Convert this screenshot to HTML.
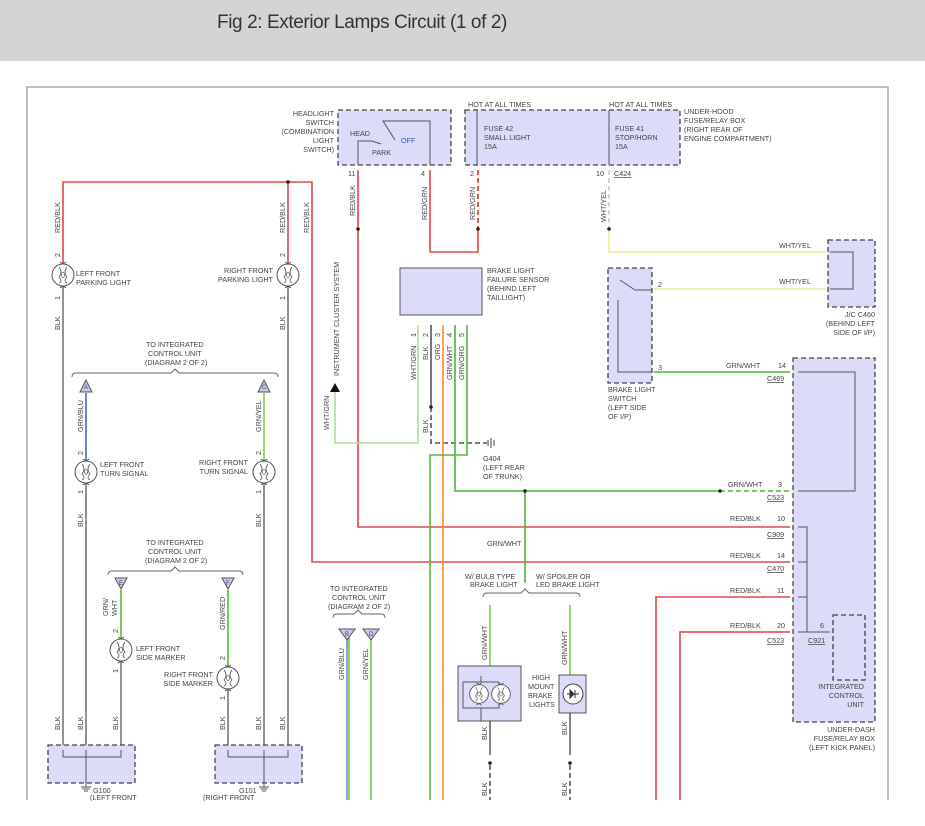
<!DOCTYPE html>
<html><head><meta charset="utf-8"><style>
html,body{margin:0;padding:0;background:#fff;width:925px;height:826px;overflow:hidden}
.hd{position:absolute;left:0;top:0;width:925px;height:61px;background:#d4d4d4}
.hd span{position:absolute;left:217px;top:12px;font:19px "Liberation Sans",sans-serif;color:#333;letter-spacing:-0.4px}
svg{position:absolute;left:0;top:0}
text{font-family:"Liberation Sans",sans-serif;font-size:7.2px;fill:#444}
</style></head><body>
<div class="hd"><span>Fig 2: Exterior Lamps Circuit (1 of 2)</span></div>
<svg width="925" height="826" viewBox="0 0 925 826">
<defs>
<g id="lamp"><circle r="11" fill="#fff" stroke="#555" stroke-width="1"/><path d="M-4,-8 Q0,-3 -4,2 Q0,6 -4,8 M4,-8 Q0,-3 4,2 Q0,6 4,8" fill="none" stroke="#555" stroke-width="0.8"/><ellipse rx="1.5" ry="2.5" fill="none" stroke="#555" stroke-width="0.7"/><path d="M-3,-13 Q0,-10 3,-13 M-3,13 Q0,10 3,13" fill="none" stroke="#555"/></g>
<g id="gnd"><path d="M0,0 v4 M-5,4 h10 M-3.5,6 h7 M-2,8 h4" stroke="#555" fill="none"/></g>
</defs>
<path d="M27,800 V87 H888 V800" fill="none" stroke="#999" stroke-width="1.3"/>
<g fill="none" stroke-width="1.6">
<path d="M63,263 V182 H312 V562 H790" stroke="#e04848"/>
<path d="M288,182 V263" stroke="#d84848"/>
<path d="M358,170 V527 H790" stroke="#e04848"/>
<path d="M430,170 V252 H478 V229" stroke="#e04848"/>
<path d="M478,170 V229" stroke="#e03030" stroke-dasharray="5,3"/>
<path d="M656,800 V597 H790" stroke="#e04848"/>
<path d="M680,800 V632 H790" stroke="#e04848"/>
<path d="M63,287 V745 M288,287 V745 M86,484 V745 M264,484 V745 M121,662 V745 M228,690 V745" stroke="#777"/>
<path d="M86,393 V460" stroke="#4466cc"/>
<path d="M264,393 V460" stroke="#88cc44"/>
<path d="M121,590 V638" stroke="#55bb33"/>
<path d="M228,590 V666" stroke="#55bb33"/>
<path d="M347,638 V800" stroke="#7788cc"/>
<path d="M349,638 V800" stroke="#66cc44"/>
<path d="M371,638 V800" stroke="#66cc44"/>
<path d="M609,170 V229" stroke="#ccc" stroke-dasharray="5,3"/>
<path d="M609,229 V252 H826" stroke="#eeee88"/>
<path d="M654,289 H826" stroke="#eee8a0"/>
<path d="M654,372 H790" stroke="#44bb33"/>
<path d="M418,325 V443 H335 V392" stroke="#b0dca0"/>
<path d="M431,325 V407" stroke="#555"/>
<path d="M431,407 V443 H487" stroke="#555" stroke-dasharray="5,3"/>
<path d="M443,325 V800" stroke="#ff8c1a"/>
<path d="M455,325 V491 H720" stroke="#44bb33"/>
<path d="M720,491 H790" stroke="#44bb33" stroke-dasharray="5,3"/>
<path d="M467,325 V455 H430 V800" stroke="#55bb33"/>
<path d="M525,491 V583" stroke="#44bb33"/>
<path d="M490,605 V667 M570,605 V676" stroke="#77cc55"/>
<path d="M490,721 V755 M570,713 V755" stroke="#666"/>
<path d="M490,765 V800 M570,765 V800" stroke="#555" stroke-dasharray="5,3"/>
</g>
<g fill="#222"><circle cx="288" cy="182" r="1.8"/><circle cx="358" cy="229" r="1.8"/><circle cx="478" cy="229" r="1.8"/><circle cx="609" cy="229" r="1.8"/><circle cx="431" cy="407" r="1.8"/><circle cx="525" cy="491" r="1.8"/><circle cx="720" cy="491" r="1.8"/><circle cx="490" cy="763" r="1.8"/><circle cx="570" cy="763" r="1.8"/><circle cx="383" cy="121" r="1.3"/><circle cx="395" cy="140" r="1.3"/><circle cx="372" cy="141" r="1.3"/></g>
<g fill="#dcdcfa" stroke="#444" stroke-width="1.3" stroke-dasharray="5,3">
<rect x="338" y="110" width="113" height="55"/>
<rect x="465" y="110" width="215" height="55"/>
<rect x="828" y="240" width="47" height="67"/>
<rect x="608" y="268" width="44" height="115"/>
<rect x="793" y="358" width="82" height="364"/>
<rect x="833" y="615" width="32" height="65"/>
<rect x="48" y="745" width="87" height="38"/>
<rect x="215" y="745" width="87" height="38"/>
</g>
<g fill="#dcdcfa" stroke="#555" stroke-width="1">
<rect x="400" y="268" width="82" height="47"/>
<rect x="458" y="666" width="63" height="55"/>
<rect x="559" y="675" width="27" height="38"/>
</g>
<g fill="none" stroke="#555" stroke-width="1">
<path d="M430,165 V121 H383 L395,140 M358,165 V141 H372 L381,144"/>
<path d="M477,110 V165 M609,110 V165"/>
<path d="M830,252 H853 V289 H830"/>
<path d="M620,280 L635,290 H652 M618,300 V372 H652"/>
<path d="M798,372 H855 V491 H798"/>
<path d="M798,527 H807 V632 H798 M807,562 H798 M807,597 H798 M807,632 H830"/>
<path d="M63,757 V750 M63,757 H121 V750 M86,750 V783 M228,757 V750 M228,757 H288 V750 M264,750 V783"/>
<path d="M463,682 H481 V676 M499,682 H481 M463,682 V708 H499 V682 M481,708 V721"/>
</g>
<use href="#gnd" x="86" y="783"/><use href="#gnd" x="264" y="783"/>
<path d="M488,440 v6 M491,438 v10 M494,440 v6" stroke="#444"/>
<use href="#lamp" x="63" y="275"/><use href="#lamp" x="288" y="275"/>
<use href="#lamp" x="86" y="472"/><use href="#lamp" x="264" y="472"/>
<use href="#lamp" x="121" y="650"/><use href="#lamp" x="228" y="678"/>
<g transform="translate(479,694) scale(0.85)"><use href="#lamp"/></g>
<g transform="translate(501,694) scale(0.85)"><use href="#lamp"/></g>
<circle cx="573" cy="694" r="10" fill="#fff" stroke="#444"/><path d="M567,694 h12 M570,690 l4,4 -4,4z M575,690 v8" stroke="#333" fill="#333"/>
<g fill="#c8c8f0" stroke="#555">
<path d="M80,392 L86,380 L92,392Z"/><path d="M258,392 L264,380 L270,392Z"/>
<path d="M115,578 H127 L121,589Z"/><path d="M222,578 H234 L228,589Z"/>
<path d="M339,629 H355 L347,640Z"/><path d="M363,629 H379 L371,640Z"/>
</g>
<path d="M330,392 L335,383 L340,392Z" fill="#111"/>
<g><text x="84" y="389" style="font-size:6px">A</text><text x="262" y="389" style="font-size:6px">C</text><text x="119" y="585" style="font-size:6px">E</text><text x="226" y="585" style="font-size:6px">F</text><text x="345" y="636" style="font-size:6px">B</text><text x="369" y="636" style="font-size:6px">D</text></g>
<g fill="none" stroke="#666"><path d="M72,377 Q72,373 76,373 H171 L175,369 L179,373 H274 Q278,373 278,377"/><path d="M108,575 Q108,571 112,571 H171 L175,567 L179,571 H239 Q243,571 243,575"/><path d="M333,618 Q333,614 337,614 H354 L358,610 L362,614 H381 Q385,614 385,618"/><path d="M483,597 Q483,593 487,593 H521 L525,589 L529,593 H576 Q580,593 580,597"/></g>
<g>
<text x="334" y="116" text-anchor="end">HEADLIGHT</text><text x="334" y="125" text-anchor="end">SWITCH</text><text x="334" y="134" text-anchor="end">(COMBINATION</text><text x="334" y="143" text-anchor="end">LIGHT</text><text x="334" y="152" text-anchor="end">SWITCH)</text>
<text x="350" y="136">HEAD</text><text x="401" y="143" style="fill:#3355aa">OFF</text><text x="372" y="155">PARK</text>
<text x="468" y="107">HOT AT ALL TIMES</text><text x="609" y="107">HOT AT ALL TIMES</text>
<text x="484" y="131">FUSE 42</text><text x="484" y="140">SMALL LIGHT</text><text x="484" y="149">15A</text>
<text x="615" y="131">FUSE 41</text><text x="615" y="140">STOP/HORN</text><text x="615" y="149">15A</text>
<text x="684" y="114">UNDER-HOOD</text><text x="684" y="123">FUSE/RELAY BOX</text><text x="684" y="132">(RIGHT REAR OF</text><text x="684" y="141">ENGINE COMPARTMENT)</text>
<text x="348" y="176">11</text><text x="421" y="176">4</text><text x="470" y="176">2</text><text x="596" y="176">10</text><text x="614" y="176" text-decoration="underline">C424</text>
<text x="487" y="273">BRAKE LIGHT</text><text x="487" y="282">FAILURE SENSOR</text><text x="487" y="291">(BEHIND LEFT</text><text x="487" y="300">TAILLIGHT)</text>
<text x="483" y="461">G404</text><text x="483" y="470">(LEFT REAR</text><text x="483" y="479">OF TRUNK)</text>
<text x="779" y="248">WHT/YEL</text><text x="779" y="284">WHT/YEL</text>
<text x="875" y="317" text-anchor="end">J/C C460</text><text x="875" y="326" text-anchor="end">(BEHIND LEFT</text><text x="875" y="335" text-anchor="end">SIDE OF I/P)</text>
<text x="658" y="287">2</text><text x="658" y="370">3</text>
<text x="608" y="392">BRAKE LIGHT</text><text x="608" y="401">SWITCH</text><text x="608" y="410">(LEFT SIDE</text><text x="608" y="419">OF I/P)</text>
<text x="726" y="368">GRN/WHT</text><text x="778" y="368">14</text><text x="767" y="381" text-decoration="underline">C469</text>
<text x="728" y="487">GRN/WHT</text><text x="778" y="487">3</text><text x="767" y="500" text-decoration="underline">C523</text>
<text x="730" y="521">RED/BLK</text><text x="777" y="521">10</text><text x="767" y="537" text-decoration="underline">C909</text>
<text x="730" y="558">RED/BLK</text><text x="777" y="558">14</text><text x="767" y="571" text-decoration="underline">C470</text>
<text x="730" y="593">RED/BLK</text><text x="777" y="593">11</text>
<text x="730" y="628">RED/BLK</text><text x="777" y="628">20</text><text x="767" y="643" text-decoration="underline">C523</text>
<text x="820" y="628">6</text><text x="808" y="643" text-decoration="underline">C921</text>
<text x="864" y="689" text-anchor="end">INTEGRATED</text><text x="864" y="698" text-anchor="end">CONTROL</text><text x="864" y="707" text-anchor="end">UNIT</text>
<text x="875" y="732" text-anchor="end">UNDER-DASH</text><text x="875" y="741" text-anchor="end">FUSE/RELAY BOX</text><text x="875" y="750" text-anchor="end">(LEFT KICK PANEL)</text>
<text x="487" y="546">GRN/WHT</text>
<text x="465" y="579">W/ BULB TYPE</text><text x="470" y="587">BRAKE LIGHT</text><text x="536" y="579">W/ SPOILER OR</text><text x="536" y="587">LED BRAKE LIGHT</text>
<text x="532" y="680">HIGH</text><text x="528" y="689">MOUNT</text><text x="528" y="698">BRAKE</text><text x="529" y="707">LIGHTS</text>
<text x="330" y="591">TO INTEGRATED</text><text x="332" y="600">CONTROL UNIT</text><text x="328" y="609">(DIAGRAM 2 OF 2)</text>
<text x="146" y="347">TO INTEGRATED</text><text x="148" y="356">CONTROL UNIT</text><text x="145" y="365">(DIAGRAM 2 OF 2)</text>
<text x="146" y="545">TO INTEGRATED</text><text x="148" y="554">CONTROL UNIT</text><text x="145" y="563">(DIAGRAM 2 OF 2)</text>
<text x="76" y="276">LEFT FRONT</text><text x="76" y="285">PARKING LIGHT</text>
<text x="273" y="273" text-anchor="end">RIGHT FRONT</text><text x="273" y="282" text-anchor="end">PARKING LIGHT</text>
<text x="100" y="467">LEFT FRONT</text><text x="100" y="476">TURN SIGNAL</text>
<text x="248" y="465" text-anchor="end">RIGHT FRONT</text><text x="248" y="474" text-anchor="end">TURN SIGNAL</text>
<text x="136" y="651">LEFT FRONT</text><text x="136" y="660">SIDE MARKER</text>
<text x="213" y="677" text-anchor="end">RIGHT FRONT</text><text x="213" y="686" text-anchor="end">SIDE MARKER</text>
<text x="93" y="793">G100</text><text x="90" y="800">(LEFT FRONT</text><text x="239" y="793">G101</text><text x="203" y="800">(RIGHT FRONT</text>
</g>
<g>
<text transform="translate(60,233) rotate(-90)">RED/BLK</text><text transform="translate(285,233) rotate(-90)">RED/BLK</text><text transform="translate(309,233) rotate(-90)">RED/BLK</text>
<text transform="translate(60,257) rotate(-90)">2</text><text transform="translate(285,257) rotate(-90)">2</text>
<text transform="translate(60,300) rotate(-90)">1</text><text transform="translate(285,300) rotate(-90)">1</text>
<text transform="translate(60,330) rotate(-90)">BLK</text><text transform="translate(285,330) rotate(-90)">BLK</text>
<text transform="translate(83,432) rotate(-90)">GRN/BLU</text><text transform="translate(261,432) rotate(-90)">GRN/YEL</text>
<text transform="translate(83,455) rotate(-90)">2</text><text transform="translate(261,455) rotate(-90)">2</text>
<text transform="translate(83,494) rotate(-90)">1</text><text transform="translate(261,494) rotate(-90)">1</text>
<text transform="translate(83,527) rotate(-90)">BLK</text><text transform="translate(261,527) rotate(-90)">BLK</text>
<text transform="translate(108,616) rotate(-90)">GRN/</text><text transform="translate(117,616) rotate(-90)">WHT</text>
<text transform="translate(225,630) rotate(-90)">GRN/RED</text>
<text transform="translate(118,633) rotate(-90)">2</text><text transform="translate(118,673) rotate(-90)">1</text>
<text transform="translate(225,660) rotate(-90)">2</text><text transform="translate(225,700) rotate(-90)">1</text>
<text transform="translate(60,730) rotate(-90)">BLK</text><text transform="translate(83,730) rotate(-90)">BLK</text><text transform="translate(118,730) rotate(-90)">BLK</text>
<text transform="translate(225,730) rotate(-90)">BLK</text><text transform="translate(261,730) rotate(-90)">BLK</text><text transform="translate(285,730) rotate(-90)">BLK</text>
<text transform="translate(355,216) rotate(-90)">RED/BLK</text><text transform="translate(427,220) rotate(-90)">RED/GRN</text><text transform="translate(475,220) rotate(-90)">RED/GRN</text><text transform="translate(606,222) rotate(-90)">WHT/YEL</text>
<text transform="translate(339,376) rotate(-90)">INSTRUMENT CLUSTER SYSTEM</text>
<text transform="translate(329,430) rotate(-90)">WHT/GRN</text>
<text transform="translate(416,337) rotate(-90)">1</text><text transform="translate(428,337) rotate(-90)">2</text><text transform="translate(440,337) rotate(-90)">3</text><text transform="translate(452,337) rotate(-90)">4</text><text transform="translate(464,337) rotate(-90)">5</text>
<text transform="translate(416,380) rotate(-90)">WHT/GRN</text><text transform="translate(428,360) rotate(-90)">BLK</text><text transform="translate(440,360) rotate(-90)">ORG</text><text transform="translate(452,380) rotate(-90)">GRN/WHT</text><text transform="translate(464,380) rotate(-90)">GRN/ORG</text>
<text transform="translate(428,433) rotate(-90)">BLK</text>
<text transform="translate(344,680) rotate(-90)">GRN/BLU</text><text transform="translate(368,680) rotate(-90)">GRN/YEL</text>
<text transform="translate(487,660) rotate(-90)">GRN/WHT</text><text transform="translate(567,665) rotate(-90)">GRN/WHT</text>
<text transform="translate(487,740) rotate(-90)">BLK</text><text transform="translate(567,735) rotate(-90)">BLK</text>
<text transform="translate(487,796) rotate(-90)">BLK</text><text transform="translate(567,796) rotate(-90)">BLK</text>
</g>
<rect x="0" y="801" width="925" height="25" fill="#fff"/>
</svg>
</body></html>
